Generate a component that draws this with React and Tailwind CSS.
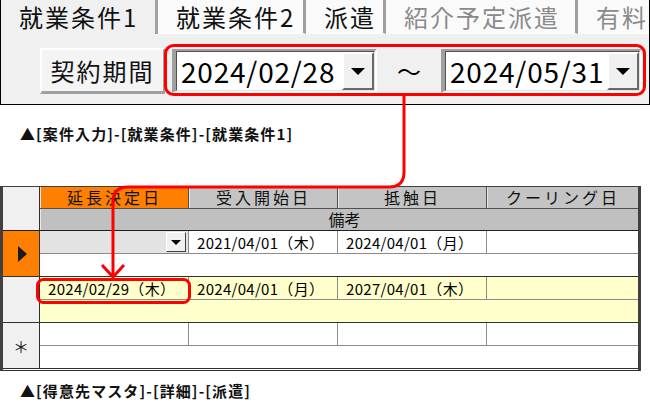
import React from "react";

const F = { fontFamily: '"Noto Sans CJK JP", "Noto Sans", sans-serif' };

function DropBtn({ small }) {
  if (small) {
    return (
      <div className="w-[20px] h-[20px] bg-[#f0f0f0] border-t border-l border-white border-r border-b border-r-[#404040] border-b-[#404040] flex items-center justify-center">
        <div className="w-0 h-0 border-l-[5px] border-r-[5px] border-t-[5px] border-l-transparent border-r-transparent border-t-black" />
      </div>
    );
  }
  return (
    <div className="w-[32px] h-full bg-[#f0f0f0] border-t-2 border-l-2 border-white border-r-2 border-b-2 border-r-[#696969] border-b-[#696969] flex items-center justify-center">
      <div className="w-0 h-0 border-l-[7px] border-r-[7px] border-t-[7px] border-l-transparent border-r-transparent border-t-black" />
    </div>
  );
}

function DateBox({ value, w }) {
  return (
    <div className={`${w} h-[44px] border-t-2 border-l-[4px] border-t-[#a0a0a0] border-l-[#a0a0a0] border-b-2 border-r-2 border-b-white border-r-white`}>
      <div className="h-full flex bg-white border-t border-l border-t-[#505050] border-l-[#505050] border-b border-r border-b-[#e3e3e3] border-r-[#e3e3e3]">
        <div className="flex-1 flex items-center pl-[4px] text-[28px] leading-none text-black tracking-[0.8px]">
          {value}
        </div>
        <DropBtn />
      </div>
    </div>
  );
}

function Tab({ label, w, active, disabled }) {
  return (
    <div
      className={`${w} h-[34px] flex items-center shrink-0 border-r-[3px] border-r-[#a0a0a0] ${
        active ? "bg-[#f0f0f0] border-b-0" : "bg-[#fafafa] border-b border-b-white"
      }`}
    >
      <span
        className={`text-[24px] leading-none tracking-[2px] pl-[18px] whitespace-nowrap ${
          disabled ? "text-[#8a8a8a]" : "text-[#111]"
        }`}
      >
        {label}
      </span>
    </div>
  );
}

const colW = ["w-[149px]", "w-[149px]", "w-[149px]", "w-[151px]"];

function Cell({ i, children, bg, extra = "" }) {
  return (
    <div
      className={`${colW[i]} h-full shrink-0 flex items-center pl-[8px] text-[15px] leading-none tracking-[0.3px] text-black ${bg} ${
        i < 3 ? "border-r border-r-[#8c8c8c]" : ""
      } ${extra}`}
    >
      {children}
    </div>
  );
}

function RowHeader({ children, bg }) {
  return (
    <div className={`w-[37px] shrink-0 h-full ${bg} border-r border-r-[#303030] border-b border-b-[#303030] flex items-center justify-center`}>
      {children}
    </div>
  );
}

function DataRow({ bg, cells, first }) {
  return (
    <div className="flex-1 flex flex-col">
      <div className="h-[23px] flex border-b border-b-[#8c8c8c]">
        {cells.map((c, i) => (
          <Cell key={i} i={i} bg={i === 0 && first ? "bg-[#e3e3e3] justify-between pr-[2px]" : bg}>
            {c}
          </Cell>
        ))}
      </div>
      <div className={`h-[23px] ${bg} border-b border-b-[#303030]`} />
    </div>
  );
}

export default function App() {
  return (
    <div className="w-[650px] h-[414px] bg-white relative overflow-hidden" style={F}>
      {/* top panel */}
      <div className="w-[650px] h-[105px] bg-[#f0f0f0] border-l border-r border-b border-black flex flex-col overflow-hidden">
        <div className="flex h-[34px]">
          <Tab label="就業条件1" w="w-[157px]" active />
          <Tab label="就業条件2" w="w-[148px]" />
          <Tab label="派遣" w="w-[80px]" />
          <Tab label="紹介予定派遣" w="w-[192px]" disabled />
          <Tab label="有料職業紹介" w="w-[120px]" disabled />
        </div>
        <div className="flex items-start pl-[39px] pt-[14px]">
          <div className="w-[125px] h-[46px] bg-[#f4f4f4] border-t-2 border-l-2 border-white border-r-2 border-b-[3px] border-r-[#a0a0a0] border-b-[#a0a0a0] flex items-center justify-center text-[24px] leading-none tracking-[2px] text-[#111]">
            契約期間
          </div>
          <div className="ml-[7px] mt-[1px]">
            <DateBox value="2024/02/28" w="w-[205px]" />
          </div>
          <div className="w-[64px] flex items-center justify-center h-[46px] text-[24px] text-black leading-none">
            ～
          </div>
          <div className="mt-[1px]">
            <DateBox value="2024/05/31" w="w-[201px]" />
          </div>
        </div>
      </div>

      <div className="pl-[20px] pt-[21px] text-[15px] font-bold leading-none text-[#111] tracking-[1.1px]">
        ▲[案件入力]-[就業条件]-[就業条件1]
      </div>

      {/* grid */}
      <div className="mt-[45px] w-[641px] h-[185px] border-t border-t-[#404040] border-l-[3px] border-l-[#404040] border-r-[3px] border-r-[#404040] border-b border-b-[#303030] flex flex-col bg-white">
        <div className="h-[44px] flex border-b border-b-[#202020]">
          <div className="w-[37px] shrink-0 bg-[#f0f0f0] border-r border-r-[#303030]" />
          <div className="flex-1 flex flex-col">
            <div className="h-[22px] flex border-b border-b-[#505050]">
              {["延長決定日", "受入開始日", "抵触日", "クーリング日"].map((t, i) => (
                <div
                  key={t}
                  className={`${colW[i]} shrink-0 h-full flex items-center justify-center text-[16px] leading-none tracking-[3px] text-[#111] border-l border-l-[#e8e8e8] ${
                    i === 0 ? "bg-[#ff8000]" : "bg-[#c4c4c4]"
                  } ${i < 3 ? "border-r border-r-[#505050]" : ""}`}
                >
                  {t}
                </div>
              ))}
            </div>
            <div className="h-[22px] bg-[#c0c0c0] border-l border-l-[#e8e8e8] flex items-center justify-center text-[16px] leading-none text-[#111] pl-[10px]">
              備考
            </div>
          </div>
        </div>

        <div className="h-[46px] flex">
          <RowHeader bg="bg-[#ff8000]">
            <div className="w-0 h-0 border-t-[8px] border-b-[8px] border-l-[9px] border-t-transparent border-b-transparent border-l-[#1a1a1a] ml-[2px]" />
          </RowHeader>
          <DataRow
            bg="bg-white"
            first
            cells={[<><span /><DropBtn small /></>, "2021/04/01（木）", "2024/04/01（月）", ""]}
          />
        </div>

        <div className="h-[46px] flex">
          <RowHeader bg="bg-[#f0f0f0]" />
          <DataRow bg="bg-[#ffffcc]" cells={["2024/02/29（木）", "2024/04/01（月）", "2027/04/01（木）", ""]} />
        </div>

        <div className="h-[46px] flex">
          <RowHeader bg="bg-[#f0f0f0]">
            <span className="text-[16px] leading-none text-[#222]">＊</span>
          </RowHeader>
          <DataRow bg="bg-white" cells={["", "", "", ""]} />
        </div>
      </div>

      <div className="pl-[20px] pt-[12px] text-[15px] font-bold leading-none text-[#111] tracking-[1.1px]">
        ▲[得意先マスタ]-[詳細]-[派遣]
      </div>

      {/* red annotations */}
      <svg className="absolute inset-0 pointer-events-none" width="650" height="414" viewBox="0 0 650 414">
        <rect x="165.5" y="45.5" width="479" height="49" rx="8" fill="none" stroke="#ff0000" strokeWidth="3" />
        <path d="M404 95 L404 172 Q404 187 389 187 L128 187 Q113 187 113 202 L113 277" fill="none" stroke="#ff0000" strokeWidth="3" />
        <path d="M102 265 L113 277 L124 265" fill="none" stroke="#ff0000" strokeWidth="3" />
        <rect x="37.5" y="279.5" width="152" height="23" rx="6" fill="none" stroke="#ff0000" strokeWidth="3" />
      </svg>
    </div>
  );
}
